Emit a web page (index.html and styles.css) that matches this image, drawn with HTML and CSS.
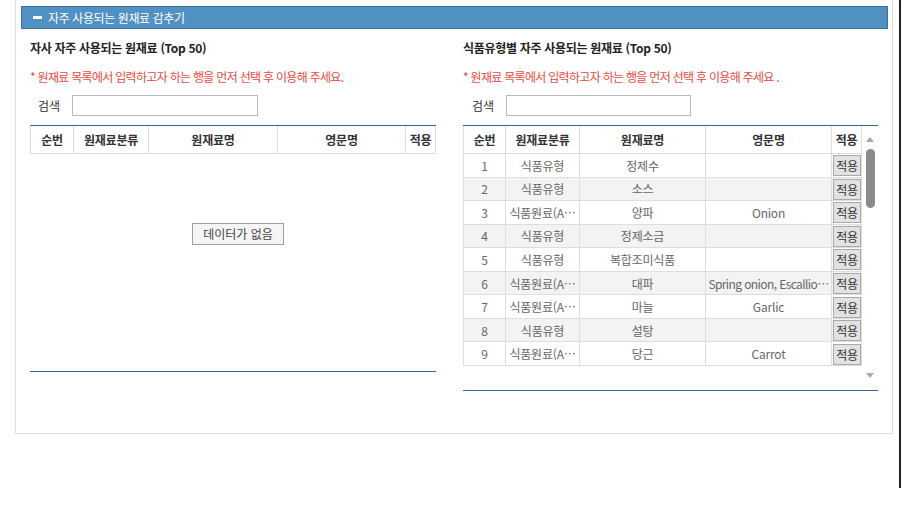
FILE: index.html
```html
<!DOCTYPE html>
<html lang="ko">
<head>
<meta charset="utf-8">
<link rel="stylesheet" href="styles.css">
</head>
<body>
<div class="frame">
  <div class="panel">
    <div class="bar"><span class="minus"></span><span class="bar-text">자주 사용되는 원재료 감추기</span></div>
    <div class="cols">
      <section class="sec sec-left">
        <h3 class="title">자사 자주 사용되는 원재료 (Top 50)</h3>
        <p class="note">* 원재료 목록에서 입력하고자 하는 행을 먼저 선택 후 이용해 주세요.</p>
        <div class="search"><label>검색</label><input class="inp" type="text"></div>
        <div class="grid grid-left">
          <div class="area">
            <div class="row head">
              <div class="c c1">순번</div><div class="c c2">원재료분류</div><div class="c c3">원재료명</div><div class="c c4">영문명</div><div class="c c5">적용</div>
            </div>
            <div class="empty"><span class="nodata">데이터가 없음</span></div>
          </div>
        </div>
      </section>
      <section class="sec sec-right">
        <h3 class="title">식품유형별 자주 사용되는 원재료 (Top 50)</h3>
        <p class="note">* 원재료 목록에서 입력하고자 하는 행을 먼저 선택 후 이용해 주세요 .</p>
        <div class="search"><label>검색</label><input class="inp" type="text"></div>
        <div class="grid grid-right">
          <div class="area">
            <div class="row head">
              <div class="c c1">순번</div><div class="c c2">원재료분류</div><div class="c c3">원재료명</div><div class="c c4">영문명</div><div class="c c5">적용</div>
            </div>
            <div class="row"><div class="c c1">1</div><div class="c c2">식품유형</div><div class="c c3">정제수</div><div class="c c4"></div><div class="c c5"><span class="btn">적용</span></div></div>
            <div class="row alt"><div class="c c1">2</div><div class="c c2">식품유형</div><div class="c c3">소스</div><div class="c c4"></div><div class="c c5"><span class="btn">적용</span></div></div>
            <div class="row"><div class="c c1">3</div><div class="c c2">식품원료(A⋯</div><div class="c c3">양파</div><div class="c c4">Onion</div><div class="c c5"><span class="btn">적용</span></div></div>
            <div class="row alt"><div class="c c1">4</div><div class="c c2">식품유형</div><div class="c c3">정제소금</div><div class="c c4"></div><div class="c c5"><span class="btn">적용</span></div></div>
            <div class="row"><div class="c c1">5</div><div class="c c2">식품유형</div><div class="c c3">복합조미식품</div><div class="c c4"></div><div class="c c5"><span class="btn">적용</span></div></div>
            <div class="row alt"><div class="c c1">6</div><div class="c c2">식품원료(A⋯</div><div class="c c3">대파</div><div class="c c4"><span class="tight">Spring onion, Escallio⋯</span></div><div class="c c5"><span class="btn">적용</span></div></div>
            <div class="row"><div class="c c1">7</div><div class="c c2">식품원료(A⋯</div><div class="c c3">마늘</div><div class="c c4">Garlic</div><div class="c c5"><span class="btn">적용</span></div></div>
            <div class="row alt"><div class="c c1">8</div><div class="c c2">식품유형</div><div class="c c3">설탕</div><div class="c c4"></div><div class="c c5"><span class="btn">적용</span></div></div>
            <div class="row"><div class="c c1">9</div><div class="c c2">식품원료(A⋯</div><div class="c c3">당근</div><div class="c c4">Carrot</div><div class="c c5"><span class="btn">적용</span></div></div>
          </div>
          <div class="sbar">
            <span class="arr up"></span>
            <span class="thumb"></span>
            <span class="arr down"></span>
          </div>
        </div>
      </section>
    </div>
  </div>
</div>
</body>
</html>
```
FILE: styles.css
```css
* { box-sizing: border-box; }
html, body { margin: 0; padding: 0; background: #fff; }
body {
  font-family: "Noto Sans CJK KR", "Noto Sans", sans-serif;
  font-size: 12px;
  color: #333;
}
.frame {
  width: 901px;
  height: 488px;
  border-right: 2px solid #222;
}
.panel {
  margin-left: 15px;
  width: 878px;
  height: 434px;
  border: 1px solid #dedede;
  border-top: none;
  padding: 6px 4px 0 5px;
}
.bar {
  height: 23px;
  background: #5190c2;
  border: 1px solid #3f729a;
  display: flex;
  align-items: center;
  padding-left: 11px;
  color: #fff;
}
.minus {
  width: 9px;
  height: 3px;
  background: #fff;
  margin-right: 6px;
}
.bar-text {
  font-size: 12px;
  line-height: 16px;
  letter-spacing: -0.4px;
}
.cols {
  display: flex;
  padding-left: 9px;
  gap: 27px;
}
.sec { display: flex; flex-direction: column; }
.sec-left { width: 406px; }
.sec-right { width: 415px; }
.title {
  margin: 10px 0 0 0;
  font-size: 12px;
  line-height: 18px;
  font-weight: bold;
  color: #222;
  letter-spacing: -0.3px;
}
.note {
  margin: 11px 0 0 0;
  font-size: 12px;
  line-height: 18px;
  color: #ea4a3c;
  letter-spacing: -0.7px;
}
.search {
  margin-top: 9px;
  display: flex;
  align-items: center;
  height: 21px;
}
.search label {
  width: 42px;
  padding-left: 8px;
  color: #333;
  line-height: 18px;
}
.sec-right .search label { padding-left: 9px; width: 43px; }
.inp {
  width: 186px;
  height: 21px;
  border: 1px solid #b9b9b9;
  padding: 0;
  margin: 0;
  font: inherit;
}
.sec-right .inp { width: 185px; }
.grid {
  margin-top: 9px;
  border-top: 1px solid #3a6585;
  border-bottom: 1px solid #3a6585;
  display: flex;
}
.grid-left { height: 247px; }
.grid-right { height: 266px; }
.area { flex: 1; display: flex; flex-direction: column; }
.row { display: flex; height: 23.55px; }
.row.alt { background: #f3f3f3; }
.row.head { height: 28px; background: #fff; font-weight: bold; color: #333; }
.c {
  display: flex;
  align-items: center;
  justify-content: center;
  border-right: 1px solid #dedede;
  border-bottom: 1px solid #dedede;
  color: #666;
  white-space: nowrap;
  overflow: hidden;
  line-height: 16px;
  letter-spacing: -0.2px;
  padding-top: 1px;
}
.tight { letter-spacing: -0.6px; }
.head .c { color: #333; }
.c1 { border-left: 1px solid #dedede; }
.grid-left .c1 { width: 44px; }
.grid-left .c2 { width: 75px; }
.grid-left .c3 { width: 129px; }
.grid-left .c4 { width: 128px; }
.grid-left .c5 { width: 30px; }
.grid-right .c1 { width: 43px; }
.grid-right .c2 { width: 74px; }
.grid-right .c3 { width: 126px; }
.grid-right .c4 { width: 126px; }
.grid-right .c5 { width: 30px; }
.row:not(.head) .c5 { padding: 1px 0 0 0; }
.btn {
  width: 29px;
  height: 21px;
  background: #e2e2e2;
  border: 1px solid #a9a9a9;
  color: #333;
  display: flex;
  align-items: center;
  justify-content: center;
  margin-left: 1px;
  padding-top: 1px;
}
.empty {
  flex: 1;
  display: flex;
  align-items: center;
  justify-content: center;
  padding-bottom: 58px;
}
.nodata {
  width: 92px;
  height: 22px;
  border: 1px solid #a0a0a0;
  background: #f5f5f5;
  display: flex;
  align-items: center;
  justify-content: center;
  color: #444;
  margin-left: 10px;
}
.sbar {
  width: 16px;
  position: relative;
}
.arr {
  position: absolute;
  left: 4px;
  width: 0;
  height: 0;
  border-left: 4px solid transparent;
  border-right: 4px solid transparent;
}
.arr.up { top: 11px; border-bottom: 5px solid #aaa; }
.arr.down { bottom: 12px; border-top: 5px solid #aaa; }
.thumb {
  position: absolute;
  left: 4px;
  top: 23px;
  width: 9px;
  height: 59px;
  border-radius: 5px;
  background: #8a8a8a;
}
```
